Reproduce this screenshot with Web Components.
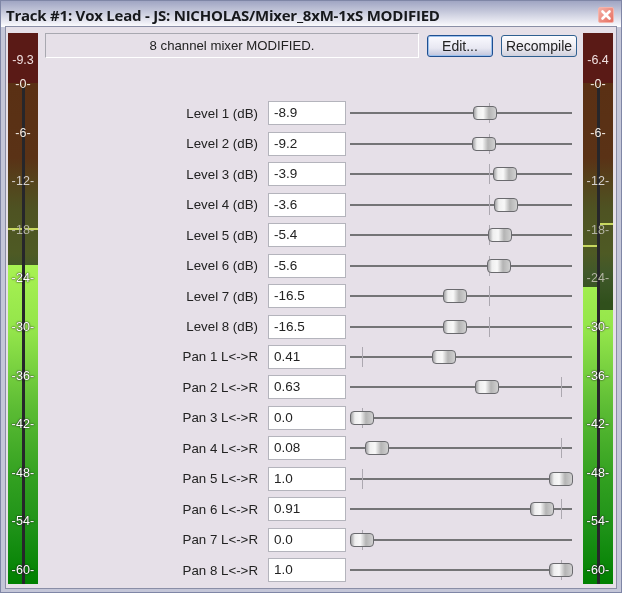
<!DOCTYPE html>
<html><head><meta charset="utf-8">
<style>
html,body{margin:0;padding:0;background:#e6e0e8}
body{width:622px;height:593px;overflow:hidden;font-family:"Liberation Sans",Arial,sans-serif}
</style></head><body>
<fx-window title-text="Track #1: Vox Lead - JS: NICHOLAS/Mixer_8xM-1xS MODIFIED">
  <fx-meter slot="left" peak="-9.3" a="265" b="265" pa="228" pb="228"></fx-meter>
  <fx-header slot="head" text="8 channel mixer MODIFIED.">
    <fx-btn primary>Edit...</fx-btn>
    <fx-btn>Recompile</fx-btn>
  </fx-header>
  <fx-row label="Level 1 (dB)" value="-8.9" thumb="485" tick="489"></fx-row>
  <fx-row label="Level 2 (dB)" value="-9.2" thumb="484" tick="489"></fx-row>
  <fx-row label="Level 3 (dB)" value="-3.9" thumb="505" tick="489"></fx-row>
  <fx-row label="Level 4 (dB)" value="-3.6" thumb="506" tick="489"></fx-row>
  <fx-row label="Level 5 (dB)" value="-5.4" thumb="500" tick="489"></fx-row>
  <fx-row label="Level 6 (dB)" value="-5.6" thumb="499" tick="489"></fx-row>
  <fx-row label="Level 7 (dB)" value="-16.5" thumb="455" tick="489"></fx-row>
  <fx-row label="Level 8 (dB)" value="-16.5" thumb="455" tick="489"></fx-row>
  <fx-row label="Pan 1 L&lt;-&gt;R" value="0.41" thumb="444" tick="362"></fx-row>
  <fx-row label="Pan 2 L&lt;-&gt;R" value="0.63" thumb="487" tick="561"></fx-row>
  <fx-row label="Pan 3 L&lt;-&gt;R" value="0.0" thumb="362" tick="362"></fx-row>
  <fx-row label="Pan 4 L&lt;-&gt;R" value="0.08" thumb="377" tick="561"></fx-row>
  <fx-row label="Pan 5 L&lt;-&gt;R" value="1.0" thumb="561" tick="362"></fx-row>
  <fx-row label="Pan 6 L&lt;-&gt;R" value="0.91" thumb="542" tick="561"></fx-row>
  <fx-row label="Pan 7 L&lt;-&gt;R" value="0.0" thumb="362" tick="362"></fx-row>
  <fx-row label="Pan 8 L&lt;-&gt;R" value="1.0" thumb="561" tick="561"></fx-row>
  <fx-meter slot="right" peak="-6.4" a="287" b="310" pa="245" pb="223"></fx-meter>
</fx-window>
<script>
function def(name,css,html){
  customElements.define(name,class extends HTMLElement{
    connectedCallback(){
      if(this.shadowRoot)return;
      const r=this.attachShadow({mode:'open'});
      r.innerHTML='<style>'+css+'</style>'+(typeof html==='function'?html(this):html);
    }
  });
}
const esc=s=>String(s).replace(/&/g,'&amp;').replace(/</g,'&lt;').replace(/>/g,'&gt;');

def('fx-window',`
:host{display:flex;flex-direction:column;width:622px;height:593px;box-sizing:border-box;
 border:1px solid #7f86a6;background:#c4c6d8;filter:blur(.35px)}
.title{flex:none;height:24px;display:flex;align-items:center;justify-content:space-between;padding:2px 7px 0 5px;box-sizing:content-box;margin-bottom:0;
 background:linear-gradient(#a0a5c3 0,#c4c7da 40%,#f2f2f8 88%,#ffffff 100%);
 font:bold 15px "Open Sans","Liberation Sans",sans-serif;color:#16181c;white-space:nowrap;letter-spacing:-.23px}
.x{width:16px;height:16px;border:1px solid #f4b4ac;border-radius:2px;background:linear-gradient(135deg,#f4b0a6,#e66e60);box-sizing:border-box;display:flex}
.x svg{width:100%;height:100%}
.frame{flex:1;min-height:0;margin:-1px 4px 3px 4px;border:1px solid #8a8ea6;background:#e6e0e8;display:grid;
 grid-template-columns:30px 1fr 30px;column-gap:7px;padding:6px 3px 3px 2px;box-sizing:border-box}
.mid{display:flex;flex-direction:column;min-width:0;margin-right:-1px}
.rows{display:flex;flex-direction:column;margin-top:39px}
`,t=>`<div class="title"><span>${esc(t.getAttribute('title-text'))}</span>
<span class="x"><svg viewBox="0 0 14 14"><path d="M3.5 3.5l7 7M10.500 3.500l-7 7" stroke="#fff" stroke-width="2.6" stroke-linecap="round"/></svg></span></div>
<div class="frame"><slot name="left"></slot><div class="mid"><slot name="head"></slot><div class="rows"><slot></slot></div></div><slot name="right"></slot></div>`);

def('fx-meter',`
:host{display:block;position:relative;width:30px;height:551px;background:#5a1a16;font:12.5px "Liberation Sans",Arial,sans-serif;color:#fff;overflow:hidden}
.ch{position:absolute;top:50px;bottom:0;width:15px;background:linear-gradient(#a8f252 0,#a8f252 182px,#92e44a 250px,#5cbc34 325px,#32a020 395px,#1e9218 445px,#008000 100%)}
.dark{position:absolute;left:0;right:0;top:0;background:linear-gradient(#5a3014 0,#5a3216 75px,#54441c 100px,#4e5222 125px,#4e5a24 170px,#40582a 190px,#30501c 220px) no-repeat;background-size:100% 240px}
.ch.l{left:0}.ch.r{right:0}
.peak{position:absolute;height:1.5px;background:#c8d860;width:15px}
.peak.l{left:0}.peak.r{right:0}
.line{position:absolute;left:13.5px;width:3px;top:54px;bottom:0;background:#26262a}
.scale{position:absolute;left:0;right:0;top:42px;display:flex;flex-direction:column;align-items:center}
.scale span{height:48.6px;line-height:18px;white-space:nowrap;position:relative;letter-spacing:.15px}
.pk{position:absolute;left:0;right:0;top:20px;text-align:center;line-height:15px;color:#f0e0e0}
.bright{color:#fff;text-shadow:0 0 2px #222,0 0 1px #222}
.dim{color:#b4b4a4}
.mid{color:#d4d0cc}
.hi{color:#f2ece6}
`,t=>{
 const a=+t.getAttribute('a'),b=+t.getAttribute('b');
 const labs=['-0-','-6-','-12-','-18-','-24-','-30-','-36-','-42-','-48-','-54-','-60-'];
 const mn=Math.max(a,b);
 const cls=i=>{const y=84+i*48.6; if(y>=mn-2) return 'bright'; if(i<2) return 'hi'; if(i==2) return 'mid'; return 'dim';};
 return `<div class="ch l"><div class="dark" style="height:${a-83}px"></div></div><div class="ch r"><div class="dark" style="height:${b-83}px"></div></div>
 <div class="peak l" style="top:${t.getAttribute('pa')-33}px"></div><div class="peak r" style="top:${t.getAttribute('pb')-33}px"></div>
 <div class="line"></div>
 <div class="pk">${t.getAttribute('peak')}</div>
 <div class="scale">${labs.map((l,i)=>`<span class="${cls(i)}">${l}</span>`).join('')}</div>`;
});

def('fx-header',`
:host{display:flex;align-items:flex-start;gap:8px;height:26px}
.box{flex:none;width:374px;height:25px;box-sizing:border-box;border:1px solid;border-color:#a8a8b0 #fff #fff #a8a8b0;text-align:center;font-size:13.2px;line-height:23px;color:#222}
.btns{display:flex;gap:8px;margin-top:2px}
`,t=>`<div class="box">${esc(t.getAttribute('text'))}</div><div class="btns"><slot></slot></div>`);

def('fx-btn',`
:host{display:block;height:22px;box-sizing:border-box;border:1px solid #2f6090;border-radius:3px;width:76px;white-space:nowrap;
 background:linear-gradient(#fdfdff 0,#eceaf0 60%,#cfd0dc 100%);font-size:14px;line-height:20px;text-align:center;color:#222}
:host([primary]){border-color:#1f4f90;box-shadow:inset 0 0 0 1px #9cc0ec;width:66px;background:linear-gradient(#fafaff,#e8e8f2 60%,#c0c4dc)}
`,`<slot></slot>`);

def('fx-row',`
:host{display:flex;align-items:center;height:30.47px}
.lab{width:213px;text-align:right;font-size:13.3px;color:#222;white-space:nowrap;flex:none}
.val{flex:none;margin-left:10px;width:78px;height:24px;box-sizing:border-box;border:1px solid #b4b4bc;background:#fff;font-size:13.5px;line-height:22px;padding-left:5px;color:#222}
.sl{flex:none;margin-left:4px;width:222px;height:26px;position:relative}
.track{position:absolute;left:0;right:0;top:12px;height:2px;background:#747476}
.tick{position:absolute;top:3px;height:20px;width:1px;background:#aca8b0}
.thumb{position:absolute;top:6px;width:24px;height:14px;box-sizing:border-box;border:1.5px solid #6a6a6e;border-radius:4px;
 background:linear-gradient(90deg,#a4a4a6 0,#efefef 18%,#f8f8f8 42%,#b4b4b4 68%,#d0d0d0 100%)}
`,t=>{
 const th=+t.getAttribute('thumb')-350,ti=+t.getAttribute('tick')-350;
 return `<div class="lab">${esc(t.getAttribute('label'))}</div><div class="val">${esc(t.getAttribute('value'))}</div>
 <div class="sl"><div class="track"></div><div class="tick" style="left:${ti}px"></div><div class="thumb" style="left:${th-12}px"></div></div>`;
});
</script>
</body></html>
